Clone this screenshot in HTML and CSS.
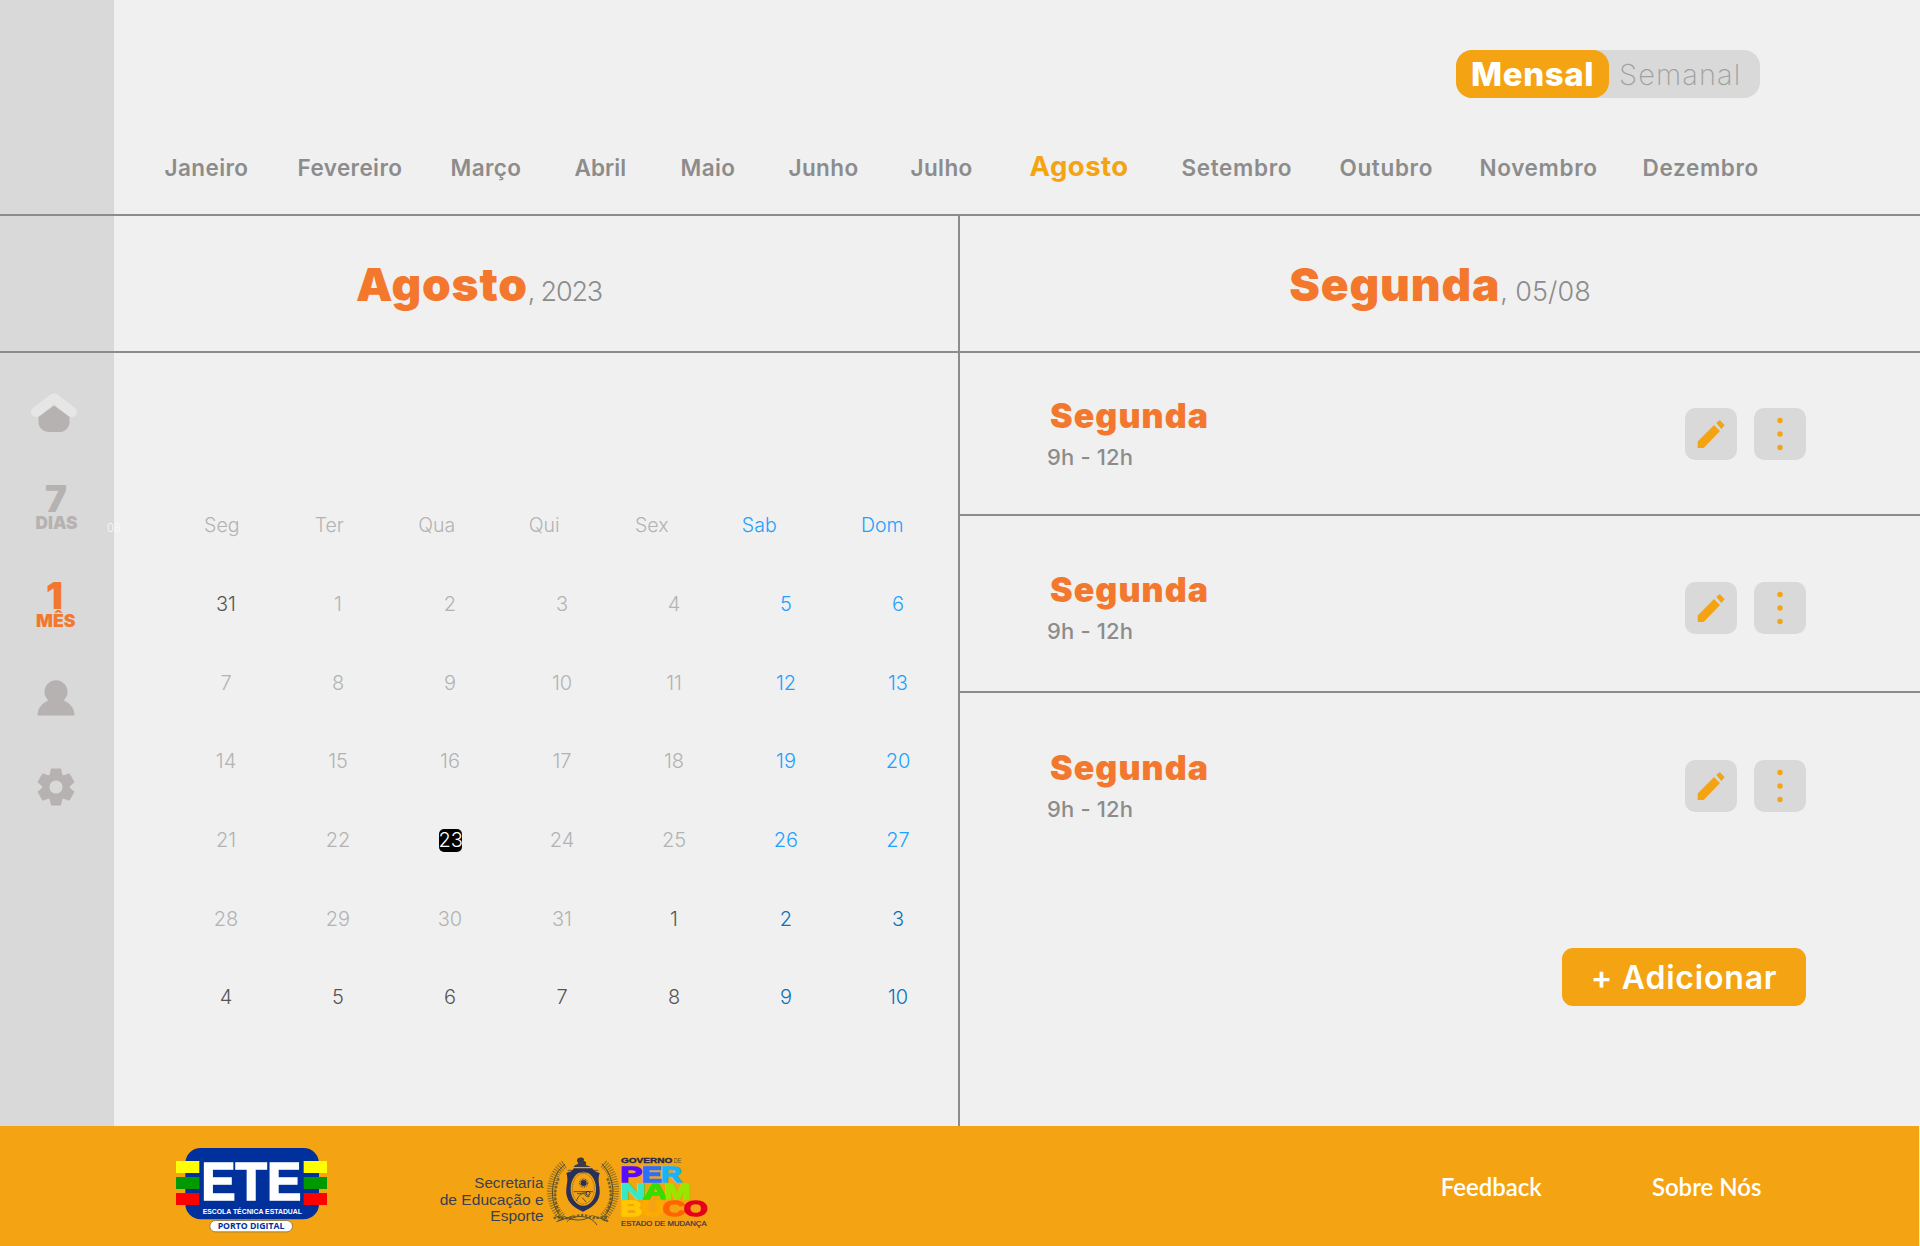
FILE: index.html
```html
<!DOCTYPE html>
<html lang="pt-BR">
<head>
<meta charset="utf-8">
<title>Calendário mensal</title>
<link rel="stylesheet" href="styles.css">
</head>
<body>
<header class="top">
  <div class="rail"></div>
  <div class="top-body">
    <div class="toggle"><div class="toggle-on">Mensal</div><div class="toggle-off">Semanal</div></div>
    <nav class="months">
      <span>Janeiro</span><span>Fevereiro</span><span>Março</span><span class="narrow">Abril</span><span>Maio</span><span>Junho</span><span>Julho</span><span class="current">Agosto</span><span class="wide">Setembro</span><span class="wide">Outubro</span><span class="wide">Novembro</span><span class="wide">Dezembro</span>
    </nav>
  </div>
</header>
<section class="titles">
  <div class="rail"></div>
  <h1 class="title title-left"><b>Agosto</b><span>, 2023</span></h1>
  <h1 class="title title-right"><b>Segunda</b><span>, 05/08</span></h1>
</section>
<main class="content">
  <aside class="rail side">
    <svg class="i-home" width="48" height="42" viewBox="0 0 48 42"><path d="M24 12.500 39.500 24v4.500a10 10 0 0 1-10 10.500H19a10 10 0 0 1-10.500-10.500V24z" fill="#b6b2b1"/><path d="M6 19 24 5.300 42 19" fill="none" stroke="#e6e6e6" stroke-width="10" stroke-linecap="round" stroke-linejoin="round"/></svg>
    <svg class="i-week" width="48" height="62" viewBox="0 -10 48 62" fill="#b6b2b1"><text class="glyph" x="12" y="30" font-size="37" textLength="22" lengthAdjust="spacingAndGlyphs">7</text><text class="glyph" x="2.500" y="47" font-size="17.500" textLength="42" lengthAdjust="spacingAndGlyphs">DIAS</text></svg>
    <svg class="i-month" width="48" height="62" viewBox="0 -10 48 62" fill="#f3782e"><text class="glyph" x="13" y="29" font-size="37" textLength="17" lengthAdjust="spacingAndGlyphs">1</text><text class="glyph" x="3" y="47" font-size="17.500" textLength="39.500" lengthAdjust="spacingAndGlyphs">MÊS</text></svg>
    <svg class="i-user" width="38" height="36" viewBox="0 0 38 36" fill="#b6b2b1"><circle cx="19" cy="11.800" r="11.500"/><path d="M.5 35.500C.5 26 8.500 20 15 20h8c6.500 0 14.500 6 14.500 15.500z"/></svg>
    <svg class="i-gear" width="38" height="38" viewBox="-19 -19 38 38" fill="#b6b2b1"><defs><path id="tooth" d="M-6.300-12-5.300-17.600Q-5.100-18.500-4.200-18.500H4.200Q5.100-18.500 5.300-17.600L6.300-12z"/></defs><circle r="10.200" fill="none" stroke="#b6b2b1" stroke-width="7.300"/><use href="#tooth"/><use href="#tooth" transform="rotate(60)"/><use href="#tooth" transform="rotate(120)"/><use href="#tooth" transform="rotate(180)"/><use href="#tooth" transform="rotate(240)"/><use href="#tooth" transform="rotate(300)"/></svg>
    <span class="tag">08</span>
  </aside>
  <section class="calendar">
    <div class="weekdays"><span>Seg</span><span>Ter</span><span>Qua</span><span>Qui</span><span>Sex</span><span class="we">Sab</span><span class="we sunday">Dom</span></div>
    <div class="days">
      <span class="out">31</span><span>1</span><span>2</span><span>3</span><span>4</span><span class="we">5</span><span class="we">6</span>
      <span>7</span><span>8</span><span>9</span><span>10</span><span>11</span><span class="we">12</span><span class="we">13</span>
      <span>14</span><span>15</span><span>16</span><span>17</span><span>18</span><span class="we">19</span><span class="we">20</span>
      <span>21</span><span>22</span><span><b class="today">23</b></span><span>24</span><span>25</span><span class="we">26</span><span class="we">27</span>
      <span>28</span><span>29</span><span>30</span><span>31</span><span class="out">1</span><span class="out we">2</span><span class="out we">3</span>
      <span class="out">4</span><span class="out">5</span><span class="out">6</span><span class="out">7</span><span class="out">8</span><span class="out we">9</span><span class="out we">10</span>
    </div>
  </section>
  <section class="agenda">
    <article class="slot first">
      <div class="slot-text"><h2>Segunda</h2><p>9h - 12h</p></div>
      <div class="btn"><svg width="52" height="52" viewBox="0 0 52 52"><path d="M12.700 33.500 29 17l6 6-16.300 17h-6zM31.300 15 34.700 12l5 5.300-3.400 3.700z"/></svg></div>
      <div class="btn"><svg width="52" height="52" viewBox="0 0 52 52"><circle cx="26" cy="12.500" r="2.700"/><circle cx="26" cy="26" r="2.700"/><circle cx="26" cy="39.500" r="2.700"/></svg></div>
    </article>
    <article class="slot">
      <div class="slot-text"><h2>Segunda</h2><p>9h - 12h</p></div>
      <div class="btn"><svg width="52" height="52" viewBox="0 0 52 52"><path d="M12.700 33.500 29 17l6 6-16.300 17h-6zM31.300 15 34.700 12l5 5.300-3.400 3.700z"/></svg></div>
      <div class="btn"><svg width="52" height="52" viewBox="0 0 52 52"><circle cx="26" cy="12.500" r="2.700"/><circle cx="26" cy="26" r="2.700"/><circle cx="26" cy="39.500" r="2.700"/></svg></div>
    </article>
    <article class="slot last">
      <div class="slot-text"><h2>Segunda</h2><p>9h - 12h</p></div>
      <div class="btn"><svg width="52" height="52" viewBox="0 0 52 52"><path d="M12.700 33.500 29 17l6 6-16.300 17h-6zM31.300 15 34.700 12l5 5.300-3.400 3.700z"/></svg></div>
      <div class="btn"><svg width="52" height="52" viewBox="0 0 52 52"><circle cx="26" cy="12.500" r="2.700"/><circle cx="26" cy="26" r="2.700"/><circle cx="26" cy="39.500" r="2.700"/></svg></div>
    </article>
    <button class="add">+ Adicionar</button>
  </section>
</main>
<footer class="foot">
  <svg class="logo-ete" width="152" height="88" viewBox="78 60 456 264">
    <rect x="106" y="66" width="401" height="214" rx="46" fill="#00309c"/>
    <path fill="#ff0" d="M78 105h70v36H78zM461 105h70v36h-70z"/><path fill="#090" d="M78 153h70v36H78zM461 153h70v36h-70z"/><path fill="#f00" d="M78 201h70v36H78zM461 201h70v36h-70z"/>
    <text class="lib" x="154" y="221" font-size="160" font-weight="700" fill="#fff" stroke="#fff" stroke-width="5" textLength="300" lengthAdjust="spacingAndGlyphs">ETE</text>
    <text class="lib" x="158" y="263" font-size="21" font-weight="700" fill="#fff" textLength="298" lengthAdjust="spacingAndGlyphs">ESCOLA TÉCNICA ESTADUAL</text>
    <rect x="179.500" y="283.500" width="248" height="34" rx="17" fill="#fff" stroke="#6b5a35" stroke-width="2"/>
    <text class="open" x="203" y="310" font-size="26" font-weight="700" fill="#00309c" textLength="200" lengthAdjust="spacingAndGlyphs">PORTO DIGITAL</text>
  </svg>
  <svg class="logo-pe" width="270" height="75" viewBox="26 44 810 225">
    <g class="lib" font-size="42" fill="#3b3f4e"><text x="132" y="144" textLength="207" lengthAdjust="spacingAndGlyphs">Secretaria</text><text x="28" y="194" textLength="312" lengthAdjust="spacingAndGlyphs">de Educação e</text><text x="180" y="243" textLength="160" lengthAdjust="spacingAndGlyphs">Esporte</text></g>
    <g fill="none" stroke="#54502f" stroke-width="3">
      <path d="M400 236C366 210 356 150 378 104c6-14 16-24 26-32M512 236c34-26 46-80 26-130-6-14-14-26-24-36"/>
      <path stroke-width="26" stroke-dasharray="3 4" opacity=".65" d="M394 230C360 196 356 142 374 106c6-14 16-26 28-34M520 230c34-36 42-84 24-126-6-14-14-26-28-36"/>
      <path stroke-width="7" stroke-dasharray="7 5" opacity=".8" d="M386 214C372 190 370 150 386 112M530 214c14-26 16-64 0-102M370 234c20-10 40 6 56-2 20-10 40-10 60 0 14 6 30-8 46 2"/>
      <path d="M384 242l46-16M486 226l48 16M410 244c20-22 70-22 90 10M400 228c30 14 60 16 84-2M376 226l22 10-20 8M530 228l-14 10 16 6"/>
    </g>
    <path d="M408 98c14-2 20-8 22-14h56c2 6 10 12 22 14-8 22 2 40 0 62-4 30-26 42-50 54-24-12-46-24-50-54-2-22 8-40 0-62z" fill="#28305a"/>
    <ellipse cx="459" cy="145" rx="38" ry="51" fill="#f4a412"/><ellipse cx="459" cy="145" rx="33" ry="46" fill="none" stroke="#54502f" stroke-width="2" stroke-dasharray="3 2"/>
    <circle cx="460" cy="128" r="9" fill="#28305a"/><circle cx="460" cy="128" r="12" fill="none" stroke="#28305a" stroke-width="4" stroke-dasharray="2 3"/>
    <path d="M430 154h58M438 182c6-14 12-22 22-22 6 0 4 14 18 8M440 160c8 2 18-4 30-2M456 172l12 14" fill="none" stroke="#54502f" stroke-width="3"/><circle cx="473" cy="159" r="6" fill="none" stroke="#28305a" stroke-width="3"/>
    <path d="M430 80c4-8 12-6 14-12-6-6-6-14 4-16 10-2 16 4 12 10 6 0 10 6 6 12l16 6z" fill="#3b3a45"/>
    <path d="M414 96h88M412 90h92" stroke="#28305a" stroke-width="2"/>
    <g class="lib"><text x="572" y="68" font-size="22" font-weight="700" fill="#25284d" stroke="#25284d" textLength="154" lengthAdjust="spacingAndGlyphs">GOVERNO</text><text x="730" y="68" font-size="22" fill="#54502f" textLength="23" lengthAdjust="spacingAndGlyphs">DE</text></g>
    <g class="lib" font-size="66" font-weight="700" stroke-width="4"><g fill="#5a0aff" stroke="#5a0aff"><text x="570" y="124" textLength="66" lengthAdjust="spacingAndGlyphs">P</text></g><g fill="#2a70ff" stroke="#2a70ff"><text x="634" y="124" textLength="60" lengthAdjust="spacingAndGlyphs">E</text></g><g fill="#14b4ff" stroke="#14b4ff"><text x="692" y="124" textLength="62" lengthAdjust="spacingAndGlyphs">R</text></g>
    <g fill="#38e8c4" stroke="#38e8c4"><text x="570" y="176" textLength="76" lengthAdjust="spacingAndGlyphs">N</text></g><g fill="#38dc00" stroke="#38dc00"><text x="638" y="176" textLength="72" lengthAdjust="spacingAndGlyphs">A</text></g><g fill="#96e600" stroke="#96e600"><text x="702" y="176" textLength="80" lengthAdjust="spacingAndGlyphs">M</text></g>
    <g fill="#ffc800" stroke="#ffc800"><text x="570" y="228" textLength="66" lengthAdjust="spacingAndGlyphs">B</text></g><g fill="#ffaa00" stroke="#ffaa00"><text x="632" y="228" textLength="68" lengthAdjust="spacingAndGlyphs">U</text></g><g fill="#ff6400" stroke="#ff6400"><text x="697" y="228" textLength="68" lengthAdjust="spacingAndGlyphs">C</text></g><g fill="#e6001e" stroke="#e6001e"><text x="760" y="228" textLength="72" lengthAdjust="spacingAndGlyphs">O</text></g></g>
    <text class="lib" x="572" y="256" font-size="22" fill="#34344a" stroke="#34344a" stroke-width=".6" textLength="257" lengthAdjust="spacingAndGlyphs">ESTADO DE MUDANÇA</text>
  </svg>
  <nav class="links"><span>Feedback</span><span>Sobre Nós</span></nav>
</footer>
</body>
</html>
```
FILE: styles.css
```css
* { box-sizing: border-box; margin: 0; padding: 0; }
body { width: 1920px; height: 1246px; overflow: hidden; background: #f0f0f0; color: #8c8c8c; font-family: Inter, sans-serif; }
.rail { flex: none; width: 114px; background: #d9d9d9; }
.top { display: flex; height: 216px; border-bottom: 2px solid #8c8c8c; }
.top-body { flex: 1; display: flex; flex-direction: column; padding-top: 50px; }
.toggle { display: flex; align-self: flex-end; width: 304px; height: 48px; margin-right: 160px; border-radius: 16px; background: #d9d9d9; }
.toggle div { display: flex; align-items: center; }
.toggle-on { width: 153px; padding-left: 15px; border-radius: 16px; background: #f4a412; color: #fff; font-size: 33px; font-weight: 800; letter-spacing: .6px; }
.toggle-off { padding-left: 10px; color: #a1a1a1; font-size: 29px; font-weight: 250; letter-spacing: 1.100px; }
.months { display: grid; grid-template-columns: 133px 153px 124px 106px 108px 122px 119px 152px 158px 140px 163px 130px; align-items: baseline; margin-top: 54px; padding-left: 50.500px; font-size: 22.500px; font-weight: 600; line-height: 28px; letter-spacing: .4px; }
.months .narrow { letter-spacing: .1px; }
.months .wide { letter-spacing: .65px; }
.months .current { color: #f4a412; font-size: 27.500px; font-weight: 700; letter-spacing: .5px; }
.titles { display: flex; height: 137px; border-bottom: 2px solid #8c8c8c; }
.title { display: flex; justify-content: center; align-items: baseline; padding-top: 41px; font-size: 27px; font-weight: 300; }
.title b { color: #f3782e; font-size: 46px; font-weight: 900; line-height: 54px; letter-spacing: .8px; }
.title span { white-space: pre; }
.title-left { width: 846px; padding-right: 114px; border-right: 2px solid #8c8c8c; }
.title-left span { letter-spacing: -1.200px; }
.title-right { flex: 1; }
.content { display: flex; height: 773px; }
.side { position: relative; display: flex; flex-direction: column; align-items: flex-start; padding: 40px 0 0 30px; }
.glyph { font-family: Inter, sans-serif; font-weight: 900; }
.i-week { margin: 37px 0 0 3px; }
.i-month { margin: 36px 0 0 3px; }
.i-user { margin: 48px 0 0 7px; }
.i-gear { margin: 52px 0 0 7px; }
.tag { position: absolute; left: 107px; top: 167px; color: #fafafa; font-size: 11px; font-weight: 300; line-height: 16px; z-index: 1; }
.calendar { width: 846px; border-right: 2px solid #8c8c8c; font-size: 20px; font-weight: 300; color: #b3b3b3; text-align: center; }
.weekdays { display: grid; grid-template-columns: repeat(7, 107.500px); margin: 160px 0 0 54px; line-height: 24px; font-size: 19.500px; }
.weekdays .sunday { padding-left: 31px; }
.days { display: grid; grid-template-columns: repeat(7, 112px); grid-auto-rows: 78.700px; margin: 28px 0 0 56px; line-height: 78.700px; }
.we { color: #21a1ff; font-weight: 350; }
.out { color: #555; font-weight: 350; }
.out.we { color: #0c72ba; }
.today { display: inline-block; border-radius: 5px; background: #000; color: #fff; font-weight: 300; line-height: 23px; width: 23px; }
.agenda { flex: 1; display: flex; flex-direction: column; }
.slot { display: flex; height: 177px; padding: 66px 114px 0 87px; border-bottom: 2px solid #8c8c8c; }
.first { height: 163px; padding-top: 55px; }
.last { height: 255px; padding-top: 67px; border: 0; }
.slot-text { flex: 1; margin-top: -12px; }
.slot-text h2 { padding-left: 3px; color: #f3782e; font-size: 34px; font-weight: 900; line-height: 40px; letter-spacing: 1.050px; }
.slot-text p { font-size: 22px; font-weight: 500; line-height: 28px; margin-top: 7px; letter-spacing: .15px; }
.btn { width: 52px; height: 52px; margin-left: 17px; border-radius: 10px; background: #d9d9d9; }
.btn svg { display: block; fill: #f4a412; }
.add { align-self: flex-end; width: 244px; height: 58px; margin-right: 114px; border: 0; border-radius: 11px; background: #f4a412; color: #fff; font: 600 32px Inter, sans-serif; letter-spacing: .8px; }
.foot { display: flex; width: 1919px; height: 120px; padding: 20px 0 0 176px; background: #f4a412; }
.lib { font-family: "Liberation Sans", sans-serif; }
.open { font-family: "Open Sans", sans-serif; }
.logo-pe { margin: 8.700px 0 0 110.700px; }
.links { display: flex; gap: 110px; margin: 27px 0 0 732px; color: #fff; font: 600 24px/28px Lato, sans-serif; }
```
